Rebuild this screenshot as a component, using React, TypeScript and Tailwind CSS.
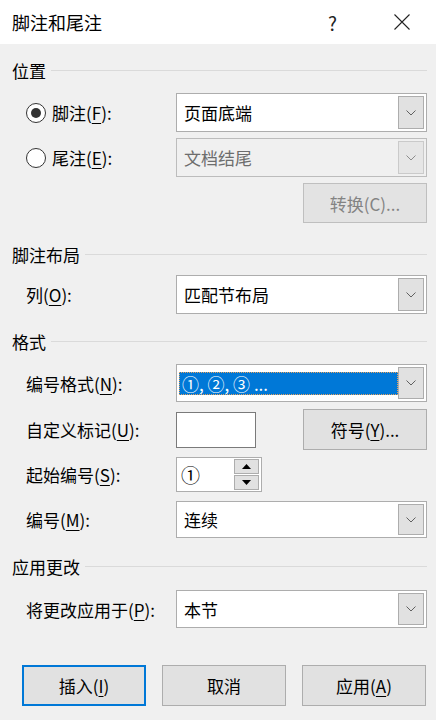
import React from "react";

const U = ({ children }: { children: React.ReactNode }) => (
  <span className="underline underline-offset-[3px] decoration-1">{children}</span>
);

function Chevron({ muted }: { muted?: boolean }) {
  return (
    <svg width="10" height="6" viewBox="0 0 10 6" className="block">
      <path d="M0.5 0.5 L5 5 L9.5 0.5" fill="none" stroke={muted ? "#8c8c8c" : "#606060"} strokeWidth="1" />
    </svg>
  );
}

function Select({
  value,
  disabled,
  focused,
  h = "h-[39px]",
}: {
  value: string;
  disabled?: boolean;
  focused?: boolean;
  h?: string;
}) {
  return (
    <div
      className={
        "flex w-[251px] border p-[2px] " +
        h +
        (disabled ? " border-[#bcbcbc] bg-[#f0f0f0]" : " border-[#adadad] bg-white")
      }
    >
      <div className="flex-1 flex items-center min-w-0">
        {focused ? (
          <div className="w-full h-[23px] bg-[#0078d7] border border-dotted border-[#e8a35c] flex items-center pl-[2px] text-white">
            {value}
          </div>
        ) : (
          <span className={"pl-[5px] " + (disabled ? "text-[#6d6d6d]" : "text-black")}>{value}</span>
        )}
      </div>
      <div
        className={
          "w-[26px] flex items-center justify-center border " +
          (disabled ? "bg-[#e6e6e6] border-[#cacaca]" : "bg-[#e1e1e1] border-[#adadad]")
        }
      >
        <Chevron muted={disabled} />
      </div>
    </div>
  );
}

function SectionHeader({ title, className = "" }: { title: string; className?: string }) {
  return (
    <div className={"flex items-center h-6 " + className}>
      <span className="text-black leading-none">{title}</span>
      <div className="flex-1 h-px bg-[#dadada] ml-[5px]" />
    </div>
  );
}

function Row({ label, children, className = "" }: { label: React.ReactNode; children: React.ReactNode; className?: string }) {
  return (
    <div className={"flex items-center " + className}>
      <div className="w-[164px] pl-[14px] text-black">{label}</div>
      {children}
    </div>
  );
}

function Radio({ checked, label }: { checked?: boolean; label: React.ReactNode }) {
  return (
    <div className="flex items-center w-[164px] pl-[14px]">
      <div className="w-[20px] h-[20px] rounded-full border border-[#333] bg-white flex items-center justify-center">
        {checked && <div className="w-[10px] h-[10px] rounded-full bg-[#333]" />}
      </div>
      <span className="ml-[6px] text-black">{label}</span>
    </div>
  );
}

function Button({ children, primary, disabled, h = "h-[41px]" }: { children: React.ReactNode; primary?: boolean; disabled?: boolean; h?: string }) {
  return (
    <div
      className={
        "w-[124px] flex items-center justify-center " +
        h +
        (primary
          ? " border-2 border-[#0078d7] bg-[#e1e1e1] text-black"
          : disabled
          ? " border border-[#bfbfbf] bg-[#e3e3e3] text-[#838383]"
          : " border border-[#adadad] bg-[#e1e1e1] text-black")
      }
    >
      {children}
    </div>
  );
}

export default function App() {
  return (
    <div className="w-[436px] h-[720px] bg-[#f0f0f0] font-['Microsoft_YaHei_UI','Noto_Sans_CJK_SC','Noto_Sans',sans-serif] text-[17px] leading-none overflow-hidden">
      {/* Title bar */}
      <div className="h-[44px] bg-white flex items-center pl-[12px] pr-[26px]">
        <span className="text-[18px] text-black">脚注和尾注</span>
        <span className="ml-auto mr-[57px] text-[19px] text-[#222]">?</span>
        <svg width="16" height="16" viewBox="0 0 16 16">
          <path d="M0.5 0.5 L15.5 15.5 M15.5 0.5 L0.5 15.5" stroke="#222" strokeWidth="1.1" />
        </svg>
      </div>

      <div className="pl-[12px] pr-[9px]">
        <SectionHeader title="位置" className="mt-[14px]" />

        <div className="flex items-center mt-[11px]">
          <Radio checked label={<>脚注(<U>F</U>):</>} />
          <Select value="页面底端" />
        </div>
        <div className="flex items-center mt-[6px]">
          <Radio label={<>尾注(<U>E</U>):</>} />
          <Select value="文档结尾" disabled />
        </div>
        <div className="flex justify-end mt-[6px]">
          <Button disabled h="h-[40px]">转换(C)...</Button>
        </div>

        <SectionHeader title="脚注布局" className="mt-[19px]" />
        <Row label={<>列(<U>O</U>):</>} className="mt-[9px]">
          <Select value="匹配节布局" />
        </Row>

        <SectionHeader title="格式" className="mt-[15px]" />
        <Row label={<>编号格式(<U>N</U>):</>} className="mt-[11px]">
          <Select value="①, ②, ③ ..." focused h="h-[38px]" />
        </Row>
        <Row label={<>自定义标记(<U>U</U>):</>} className="mt-[7px]">
          <div className="w-[251px] flex items-center justify-between">
            <div className="w-[80px] h-[36px] bg-white border border-[#7a7a7a]" />
            <Button>符号(<U>Y</U>)...</Button>
          </div>
        </Row>
        <Row label={<>起始编号(<U>S</U>):</>} className="mt-[7px]">
          <div className="w-[86px] h-[35px] bg-white border border-[#adadad] flex items-center pr-[2px]">
            <span className="flex-1 pl-[4px] text-[19px]">①</span>
            <div className="flex flex-col w-[25px] gap-px">
              <div className="h-[15px] bg-[#e1e1e1] border border-[#adadad] flex items-center justify-center">
                <svg width="9" height="5" viewBox="0 0 9 5"><path d="M0 5 L4.5 0 L9 5 Z" fill="#000" /></svg>
              </div>
              <div className="h-[15px] bg-[#e1e1e1] border border-[#adadad] flex items-center justify-center">
                <svg width="9" height="5" viewBox="0 0 9 5"><path d="M0 0 L4.5 5 L9 0 Z" fill="#000" /></svg>
              </div>
            </div>
          </div>
        </Row>
        <Row label={<>编号(<U>M</U>):</>} className="mt-[9px]">
          <Select value="连续" h="h-[37px]" />
        </Row>

        <SectionHeader title="应用更改" className="mt-[16px]" />
        <Row label={<>将更改应用于(<U>P</U>):</>} className="mt-[12px]">
          <Select value="本节" h="h-[38px]" />
        </Row>

        <div className="flex gap-[16px] pl-[10px] mt-[37px]">
          <Button primary>插入(<U>I</U>)</Button>
          <Button>取消</Button>
          <Button>应用(<U>A</U>)</Button>
        </div>
      </div>
    </div>
  );
}
